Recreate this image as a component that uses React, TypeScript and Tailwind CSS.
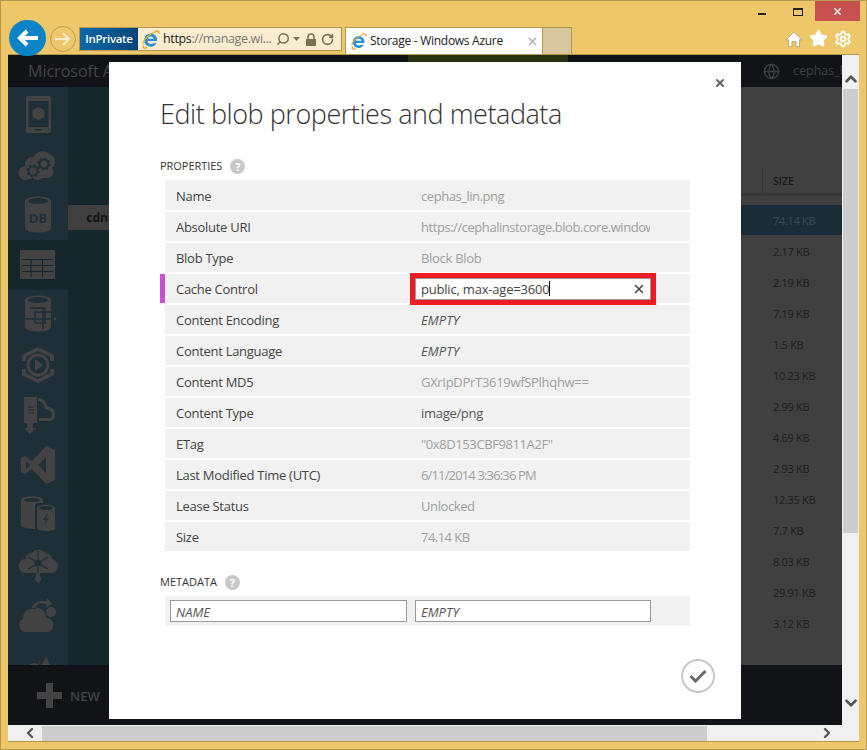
import { ChevronDown, ChevronLeft, ChevronRight, ChevronUp, Globe, RotateCw, Search, Settings, Star, X } from "lucide-react";

const font = { fontFamily: '"Open Sans", "Noto Sans", sans-serif' };

const properties = [
  { label: "Name", value: "cephas_lin.png", track: "tracking-[-0.45px] text-[#a0a0a0]" },
  { label: "Absolute URI", value: "https://cephalinstorage.blob.core.windows", track: "tracking-[-0.45px] text-[#a0a0a0]" },
  { label: "Blob Type", value: "Block Blob", track: "tracking-[-0.3px] text-[#a0a0a0]" },
  { label: "Cache Control", editing: true },
  { label: "Content Encoding", value: "EMPTY", track: "italic tracking-[0.1px] text-[#555]" },
  { label: "Content Language", value: "EMPTY", track: "italic tracking-[0.1px] text-[#555]" },
  { label: "Content MD5", value: "GXrIpDPrT3619wfSPlhqhw==", track: "tracking-[-0.3px] text-[#a0a0a0]" },
  { label: "Content Type", value: "image/png", track: "tracking-[-0.3px] text-[#555]" },
  { label: "ETag", value: '"0x8D153CBF9811A2F"', track: "tracking-[-0.4px] text-[#a0a0a0]" },
  { label: "Last Modified Time (UTC)", value: "6/11/2014 3:36:36 PM", track: "tracking-[-0.85px] text-[#a0a0a0]" },
  { label: "Lease Status", value: "Unlocked", track: "tracking-[-0.4px] text-[#a0a0a0]" },
  { label: "Size", value: "74.14 KB", track: "tracking-[-0.55px] text-[#a0a0a0]" },
];

const sizes = ["2.17 KB", "2.19 KB", "7.19 KB", "1.5 KB", "10.23 KB", "2.99 KB", "4.69 KB", "2.93 KB", "12.35 KB", "7.7 KB", "8.03 KB", "29.91 KB", "3.12 KB"];

function IeLogo({ size = 18 }: { size?: number }) {
  return (
    <svg width={size} height={size} viewBox="0 0 18 18" className="shrink-0">
      <path d="M3 14.5C1 17 3 18 6 16.5M13 1.6C15.5.4 17.5 1 17 3.5" fill="none" stroke="#e8a81c" strokeWidth="1.3" />
      <path d="M9.3 3.2a6.3 6.3 0 0 0-6.4 6.3 6.3 6.3 0 0 0 11.8 3h-3.2a3.2 3.2 0 0 1-5.3-2h9a6 6 0 0 0-5.900-7.300zM6.300 8.300a3 3 0 0 1 5.800 0z" fill="#2f8fd8" />
      <path d="M1.500 13C3 8 8.500 3.500 13.500 1.800" fill="none" stroke="#e8b52c" strokeWidth="1.100" />
    </svg>
  );
}

function HelpDot() {
  return (
    <span className="flex h-[15px] w-[15px] items-center justify-center rounded-full bg-[#c8c8c8] text-[11px] font-bold leading-none text-white">?</span>
  );
}

// dimmed portal nav icons, hand drawn since no package has these
function NavIcon({ children }: { children: React.ReactNode }) {
  return (
    <svg width="40" height="40" viewBox="0 0 40 40" fill="#434343" className="shrink-0">
      {children}
    </svg>
  );
}

function Gear({ x, y }: { x: number; y: number }) {
  return (
    <g>
      <circle cx={x} cy={y} r="4.500" fill="none" stroke="#1f2f37" strokeWidth="2" />
      <circle cx={x} cy={y} r="6" fill="none" stroke="#1f2f37" strokeWidth="1.500" strokeDasharray="2 2.700" />
    </g>
  );
}

const navIcons = [
  <NavIcon key="mobile">
    <rect x="8" y="1" width="25" height="37" rx="2" />
    <rect x="10.500" y="6" width="20" height="26" fill="#1f2f37" />
    <path d="M20.500 12l6 3v7l-6 3-6-3v-7z" />
    <rect x="17" y="34" width="7" height="1.500" fill="#1f2f37" />
  </NavIcon>,
  <NavIcon key="cloud">
    <path d="M8 35a7 7 0 0 1-1-14 8 8 0 0 1 9-9 9 9 0 0 1 15-3 8 8 0 0 1 3 14 6 6 0 0 1-4 10h-6a6 6 0 0 1-9 0z" />
    <Gear x={15} y={26} />
    <Gear x={26} y={19} />
  </NavIcon>,
  <NavIcon key="db">
    <path d="M7 6c0-6 26-6 26 0v27c0 6-26 6-26 0z" />
    <ellipse cx="20" cy="6" rx="10" ry="3" fill="#1f2f37" />
    <text x="20" y="28" textAnchor="middle" fontSize="13" fontWeight="700" fill="#1f2f37" style={font}>DB</text>
  </NavIcon>,
  <NavIcon key="table">
    <rect x="2" y="5" width="35" height="29" rx="1" />
    <path d="M4 14.500h31M4 20.500h31M4 26.500h31M13 14v18M24.500 14v18" stroke="#16262d" strokeWidth="1.200" fill="none" />
  </NavIcon>,
  <NavIcon key="sql">
    <path d="M7 5c0-6 26-6 26 0v27c0 6-26 6-26 0z" />
    <ellipse cx="20" cy="5" rx="10" ry="3" fill="#1f2f37" />
    <path d="M12 13h15v15H17V17h16M6 24h33M25 12v22" fill="none" stroke="#1f2f37" strokeWidth="1.500" />
    <path d="M36 22l3 2-3 2z" />
  </NavIcon>,
  <NavIcon key="media">
    <path d="M20 2l16 8v6h-4v-4l-12-6-12 6v4H4v-6zM20 38L4 30v-6h4v4l12 6 12-6v-4h4v6z" />
    <circle cx="20" cy="20" r="10" fill="none" stroke="#434343" strokeWidth="3" />
    <path d="M17 14l8 6-8 6z" />
  </NavIcon>,
  <NavIcon key="deploy">
    <path d="M6 2h13v26h-4v5h3l-6 6-6-6h3v-5H6z" />
    <path d="M20 3c5 0 8 3 9 8 4 1 8 3 8 9 0 3-2 6-5 6H21v-3h10c2 0 3-1 3-3 0-4-3-5-7-6-1-5-3-8-7-8z" />
    <path d="M10 12h6M10 15h6M10 18h6" stroke="#1f2f37" strokeWidth="1.200" />
  </NavIcon>,
  <NavIcon key="vs">
    <path d="M28 1l9 4v30l-9 4-14-15-7 5-4-2V13l4-2 7 5zM28 12l-8 8 8 8zM8 16v8l4-4z" fillRule="evenodd" />
  </NavIcon>,
  <NavIcon key="cache">
    <path d="M3 5c0-5 22-5 22 0v3h-3c-5 0-5 1-5 5v21c-4 0-14-1-14-4z" />
    <ellipse cx="14" cy="5" rx="8" ry="2" fill="#1f2f37" />
    <path d="M19 13c0-4 18-4 18 0v20c0 4-18 4-18 0z" />
    <ellipse cx="28" cy="13" rx="7" ry="2" fill="#1f2f37" />
    <path d="M30 18l-5 7h3l-2 5 5-7h-3z" fill="#1f2f37" />
  </NavIcon>,
  <NavIcon key="bus">
    <path d="M8 28a7 7 0 0 1-1-14 8 8 0 0 1 7-6 9 9 0 0 1 14 0 8 8 0 0 1 6 6 7 7 0 0 1-2 14H22v4a3 3 0 1 1-4 0v-4z" />
    <circle cx="20" cy="18" r="3.500" fill="#1f2f37" />
    <path d="M20 6v8M20 22v6M10 12l7 4M30 12l-7 4M10 24l7-4M30 24l-7-4" stroke="#1f2f37" strokeWidth="1.200" />
  </NavIcon>,
  <NavIcon key="backup">
    <path d="M7 37a7 7 0 0 1-2-13 9 9 0 0 1 8-10 10 10 0 0 1 15 9 7 7 0 0 1 1 14z" />
    <path d="M13 13c2-6 9-9 15-7l1-3 6 6-8 4 1-3c-5-2-9-1-11 4z" stroke="#1f2f37" strokeWidth="1" />
    <circle cx="33" cy="17" r="5" />
  </NavIcon>,
  <NavIcon key="scheduler">
    <path d="M5 38a8 8 0 0 1 3-14 9 9 0 0 1 12-5l4-6-1 8 5-9 7 14v12z" />
    <path d="M24 13l-3 10h4l-2 8" fill="none" stroke="#1f2f37" strokeWidth="2" />
  </NavIcon>,
];

export default function App() {
  return (
    <div className="relative flex h-[750px] w-[867px] flex-col overflow-hidden border border-[#b89b52] bg-[#efc76b]" style={font}>
      {/* window controls */}
      <div className="flex h-[20px] items-start justify-end pr-[6px]">
        <div className="mr-[27px] mt-[12px] h-[2px] w-[8px] bg-[#222]" />
        <div className="mr-[12px] mt-[7px] h-[8px] w-[10px] border border-t-2 border-[#222]" />
        <div className="flex h-[20px] w-[45px] items-center justify-center bg-[#c75050]">
          <X size={11} strokeWidth={3} color="#fff" />
        </div>
      </div>

      {/* browser toolbar */}
      <div className="flex h-[33px] items-start pl-[8px]">
        <div className="relative z-10 mt-[-1px] flex h-[36px] w-[37px] shrink-0 items-center justify-center rounded-full bg-[#0a84c6]">
          <svg width="22" height="18" viewBox="0 0 22 18" fill="none" stroke="#fff" strokeWidth="4">
            <path d="M21 9H4M10 2L3 9l7 7" />
          </svg>
        </div>
        <div className="ml-[4px] mt-[5px] flex h-[26px] w-[26px] shrink-0 items-center justify-center rounded-full border border-[#b99d5a]">
          <svg width="16" height="14" viewBox="0 0 16 14" fill="none" stroke="#fbeacb" strokeWidth="2">
            <path d="M0 7h14M8 1l6 6-6 6" />
          </svg>
        </div>
        <div className="ml-[3px] mt-[6px] flex h-[24px] w-[263px] shrink-0 items-center border border-[#b3964f] bg-[#faedcf]">
          <div className="flex h-full w-[58px] shrink-0 items-center justify-center bg-gradient-to-r from-[#0b6aa6] to-[#03457a] text-[11.500px] font-semibold tracking-[-0.3px] text-white">InPrivate</div>
          <div className="ml-[3px]"><IeLogo size={19} /></div>
          <span className="ml-[3px] whitespace-nowrap text-[12.500px] tracking-[-0.35px] text-[#222]">https<span className="text-[#777]">://manage.wi...</span></span>
          <Search size={14} strokeWidth={2.500} color="#7b6f4f" className="ml-[4px] -scale-x-100" />
          <svg width="7" height="4" viewBox="0 0 7 4" fill="#7b6f4f" className="ml-[3px]"><path d="M0 0h7L3.500 4z" /></svg>
          <svg width="12" height="13" viewBox="0 0 12 13" fill="#7b6f4f" className="ml-[5px]">
            <path d="M1 6h10v7H1z" />
            <path d="M3 6V4a3 3 0 0 1 6 0v2" fill="none" stroke="#7b6f4f" strokeWidth="1.500" />
          </svg>
          <RotateCw size={13} strokeWidth={3} color="#7b6f4f" className="ml-[4px]" />
        </div>
        <div className="ml-[3px] mt-[6px] flex h-[27px] w-[198px] shrink-0 items-center border border-b-0 border-[#b3964f] bg-white pl-[4px]">
          <IeLogo size={17} />
          <span className="ml-[3px] whitespace-nowrap text-[12px] tracking-[-0.28px] text-[#222]">Storage - Windows Azure</span>
          <X size={13} strokeWidth={3} color="#b5b5b5" className="ml-auto mr-[3px]" />
        </div>
        <div className="mt-[6px] h-[27px] w-[29px] shrink-0 border border-b-0 border-l-0 border-[#b3964f] bg-[#d6c7a0]" />
        <div className="ml-auto mr-[14px] mt-[8px] flex items-center">
          <svg width="16" height="16" viewBox="0 0 19 18" fill="#fff" stroke="#8a7a50" strokeWidth="0.600">
            <path d="M9.500 1L19 10h-3v8h-4v-6H7v6H3v-8H0z" />
          </svg>
          <Star size={19} color="#fff" fill="#fff" className="ml-[7px]" />
          <Settings size={18} strokeWidth={2.500} color="#fff" className="ml-[6px]" />
        </div>
      </div>

      {/* browser viewport and vertical scrollbar */}
      <div className="ml-[7px] mr-[7px] flex min-h-0 flex-1 border-t border-[#b3964f]">
        <div className="relative flex min-w-0 flex-1 flex-col">
          <div className="flex h-[32px] shrink-0 items-center bg-[#111317]">
            <span className="ml-[20px] whitespace-nowrap text-[16px] text-[#454545]">Microsoft Azure</span>
            <div className="ml-[262px] h-[7px] w-[160px] self-start bg-[#2a3310]" />
            <Globe size={17} color="#3f3f3f" className="ml-auto mr-[13px]" />
            <span className="w-[49px] overflow-hidden whitespace-nowrap text-[12.500px] text-[#3f3f3f]">cephas_lin</span>
          </div>

          <div className="flex min-h-0 flex-1">
            <div className="flex h-full w-[60px] shrink-0 flex-col items-center overflow-hidden bg-[#1f2f37] pt-[3px]">
              {navIcons.map((icon, i) => (
                <div key={i} className={`flex h-[50px] w-full shrink-0 items-center justify-center ${i === 3 ? "bg-[#16262d]" : ""}`}>
                  {icon}
                </div>
              ))}
            </div>
            <div className="flex flex-1 flex-col bg-[#16262d] pt-[118px]">
              <div className="flex h-[25px] w-[41px] items-center justify-end bg-[#404040] pr-[1px] text-[12px] font-bold text-[#111317]">cdn</div>
            </div>
            <div className="flex w-[200px] shrink-0 flex-col bg-[#404040] text-[#1c1c1c]">
              <div className="ml-[120px] mt-[81px] flex h-[25px] items-center border-l border-[#353535] pl-[10px] pt-[2px] text-[10.500px] font-semibold text-[#1a1a1a]">SIZE</div>
              <div className="h-[3px] bg-[#383838]" />
              <div className="mb-[1px] mt-[9px] flex h-[30px] items-center bg-[#1a2d35] pl-[131px] pt-[2px] text-[11px] tracking-[-0.3px] text-[#3c4b50]">74.14 KB</div>
              {sizes.map((s) => (
                <div key={s} className="flex h-[31px] items-center pl-[131px] pt-[2px] text-[11px] tracking-[-0.3px] text-[#1c1c1c]">{s}</div>
              ))}
            </div>
          </div>

          <div className="flex h-[60px] shrink-0 items-center bg-[#111317] pl-[29px]">
            <svg width="25" height="25" viewBox="0 0 25 25" fill="#434343"><path d="M9 0h7v9h9v7h-9v9H9v-9H0V9h9z" /></svg>
            <span className="ml-[8px] pt-[3px] text-[13px] font-semibold text-[#434343]">NEW</span>
          </div>

          {/* modal sits over the dimmed portal */}
          <div className="absolute left-[101px] top-[7px] flex h-[657px] w-[632px] flex-col bg-white pl-[51px] pr-[51px]">
            <X size={12} strokeWidth={4} color="#666" className="absolute right-[15px] top-[15px]" />
            <h1 className="mt-[32px] whitespace-nowrap text-[27px] font-light leading-[40px] tracking-[-0.45px] text-[#333]">Edit blob properties and metadata</h1>
            <div className="mt-[23px] flex h-[18px] items-center gap-[8px] text-[11px] tracking-[-0.05px] text-[#333]">
              PROPERTIES <HelpDot />
            </div>
            <div className="mt-[5px] flex flex-col gap-[2px] pl-[5px]">
              {properties.map((p, i) => (
                <div key={p.label} className={`relative flex w-[525px] items-center bg-[#f1f1f1] ${i === 0 ? "h-[30px] pt-[1px]" : "h-[29px]"}`}>
                  {p.editing && <div className="absolute left-[-5px] top-0 h-full w-[5px] bg-[#cc4fd3]" />}
                  <span className="w-[256px] shrink-0 pl-[11px] pt-[2px] text-[13px] tracking-[-0.28px] text-[#444]">{p.label}</span>
                  {p.editing ? (
                    <div className="z-10 -my-[1px] ml-[-11px] flex h-[32px] w-[246px] items-center border-[5px] border-[#ed1c24] bg-white">
                      <div className="flex h-full w-full items-center border border-[#999] pl-[5px] pr-[4px] text-[13px] tracking-[-0.2px] text-[#444]">
                        <span className="pt-[2px]">public, max-age=3600</span>
                        <span className="h-[15px] w-px bg-black" />
                        <X size={14} strokeWidth={2.500} color="#444" className="ml-auto" />
                      </div>
                    </div>
                  ) : (
                    <span className={`w-[229px] overflow-hidden whitespace-nowrap pt-[2px] text-[13px] ${p.track}`}>{p.value}</span>
                  )}
                </div>
              ))}
            </div>
            <div className="mt-[22px] flex h-[18px] items-center gap-[8px] text-[11px] text-[#333]">
              METADATA <HelpDot />
            </div>
            <div className="ml-[5px] mt-[5px] flex h-[30px] w-[525px] items-center gap-[8px] bg-[#f1f1f1] pl-[5px]">
              <div className="flex h-[22px] w-[237px] items-center border border-[#999] bg-white pl-[5px] pt-[3px] text-[13px] italic text-[#555]">NAME</div>
              <div className="flex h-[22px] w-[236px] items-center border border-[#999] bg-white pl-[5px] pt-[3px] text-[13px] italic text-[#555]">EMPTY</div>
            </div>
            <div className="absolute bottom-[26px] right-[26px] flex h-[34px] w-[34px] items-center justify-center rounded-full border-[2px] border-[#c8c8c8]">
              <svg width="18" height="14" viewBox="0 0 18 14" fill="none" stroke="#6a6a6a" strokeWidth="3"><path d="M1.500 7l5 5L16.500 2" /></svg>
            </div>
          </div>
        </div>

        <div className="flex w-[17px] shrink-0 flex-col items-center bg-[#f0f0f0]">
          <ChevronUp size={18} strokeWidth={3.500} color="#555" className="mt-[15px] shrink-0" />
          <div className="mt-[1px] h-[444px] w-[15px] shrink-0 bg-[#cdcdcd]" />
          <ChevronDown size={18} strokeWidth={3.500} color="#555" className="mb-[13px] mt-auto shrink-0" />
        </div>
      </div>

      {/* horizontal scrollbar */}
      <div className="mx-[7px] mb-[7px] flex h-[17px] shrink-0 items-center border-b border-[#b3964f] bg-[#f0f0f0]">
        <ChevronLeft size={16} strokeWidth={3.500} color="#555" className="ml-[14px] shrink-0" />
        <div className="ml-[4px] h-[15px] w-[665px] shrink-0 bg-[#cdcdcd]" />
        <ChevronRight size={16} strokeWidth={3.500} color="#555" className="ml-[112px] shrink-0" />
      </div>
    </div>
  );
}
